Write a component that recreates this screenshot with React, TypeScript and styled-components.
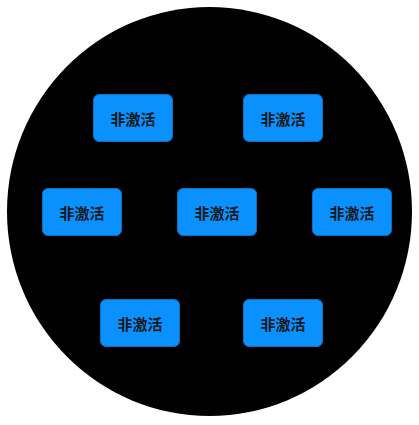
import styled, { createGlobalStyle } from "styled-components";

const GlobalStyle = createGlobalStyle`
    html, body {
        margin: 0;
        padding: 0;
        background: #ffffff;
    }
`

interface RowProps {
    $left: number;
    $gap: number;
    $top: number;
}

const rows: RowProps[] = [
    { $left: 86, $gap: 70, $top: 87 },
    { $left: 35, $gap: 55, $top: 46 },
    { $left: 93, $gap: 63, $top: 63 },
];

const counts = [2, 3, 2];

function App() {
    return (
        <>
            <GlobalStyle />
            <Page>
                <Dial>
                    {rows.map((row, i) => (
                        <Row key={i} $left={row.$left} $gap={row.$gap} $top={row.$top}>
                            {Array.from({ length: counts[i] }).map((_, j) => (
                                <StateButton key={j}>非激活</StateButton>
                            ))}
                        </Row>
                    ))}
                </Dial>
            </Page>
        </>
    )
}

const Page = styled.div`
    width: 419px;
    height: 425px;
    padding: 7px 0 0 7px;
    box-sizing: border-box;
`

const Dial = styled.div`
    width: 405px;
    height: 409px;
    border-radius: 50%;
    background-color: #000000;
    display: flex;
    flex-direction: column;
    overflow: hidden;
`

const Row = styled.div<RowProps>`
    display: flex;
    flex-direction: row;
    padding-left: ${p => p.$left}px;
    gap: ${p => p.$gap}px;
    margin-top: ${p => p.$top}px;
`

const StateButton = styled.div`
    width: 80px;
    height: 48px;
    box-sizing: border-box;
    border-radius: 6px;
    background-color: #0a91fd;
    border: 1px solid #0b6fc4;
    display: flex;
    align-items: center;
    justify-content: center;
    font-family: "Noto Sans CJK SC", "Noto Sans", sans-serif;
    font-size: 15px;
    font-weight: 700;
    color: #141a22;
`

export default App;
